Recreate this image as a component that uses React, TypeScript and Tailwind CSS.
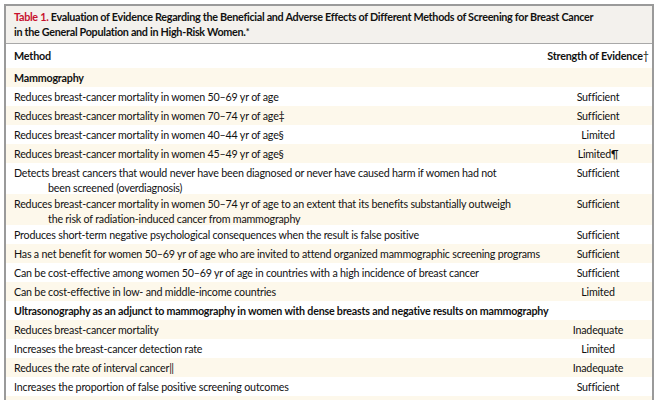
const rows: { text: string[]; value?: string; bold?: boolean }[] = [
  { text: ['Mammography'], bold: true },
  { text: ['Reduces breast-cancer mortality in women 50–69 yr of age'], value: 'Sufficient' },
  { text: ['Reduces breast-cancer mortality in women 70–74 yr of age‡'], value: 'Sufficient' },
  { text: ['Reduces breast-cancer mortality in women 40–44 yr of age§'], value: 'Limited' },
  { text: ['Reduces breast-cancer mortality in women 45–49 yr of age§'], value: 'Limited¶' },
  {
    text: [
      'Detects breast cancers that would never have been diagnosed or never have caused harm if women had not',
      'been screened (overdiagnosis)',
    ],
    value: 'Sufficient',
  },
  {
    text: [
      'Reduces breast-cancer mortality in women 50–74 yr of age to an extent that its benefits substantially outweigh',
      'the risk of radiation-induced cancer from mammography',
    ],
    value: 'Sufficient',
  },
  { text: ['Produces short-term negative psychological consequences when the result is false positive'], value: 'Sufficient' },
  { text: ['Has a net benefit for women 50–69 yr of age who are invited to attend organized mammographic screening  programs'], value: 'Sufficient' },
  { text: ['Can be cost-effective among women 50–69 yr of age in countries with a high incidence of breast cancer'], value: 'Sufficient' },
  { text: ['Can be cost-effective in low- and middle-income countries'], value: 'Limited' },
  { text: ['Ultrasonography as an adjunct to mammography in women with dense breasts and negative results on mammography'], bold: true },
  { text: ['Reduces breast-cancer mortality'], value: 'Inadequate' },
  { text: ['Increases the breast-cancer detection rate'], value: 'Limited' },
  { text: ['Reduces the rate of interval cancer‖'], value: 'Inadequate' },
  { text: ['Increases the proportion of false positive screening outcomes'], value: 'Sufficient' },
  { text: [''], value: '' },
]

export default function App() {
  return (
    <div className="w-[660px] h-[400px] overflow-hidden bg-white pt-[4px] pl-[4px] pr-[6px] font-['Lato','Liberation_Sans',sans-serif] text-[#111]">
      <div className="border-x-2 border-t-2 border-[#9a9a9a]">
        <div className="bg-[#f3f1ed] border-b border-[#a8a8a8] pl-[8px] pr-2 pt-[3px] pb-[2px] h-[38px] text-[10.8px] tracking-[-0.3px] leading-[15px] font-bold whitespace-nowrap">
          <span className="text-[#c8102e]">Table 1.</span> Evaluation of Evidence Regarding the Beneficial and Adverse Effects of Different Methods of Screening for Breast Cancer
          <br />
          in the General Population and in High-Risk Women.
          <span className="text-[9px] align-top">*</span>
        </div>
        <div className="flex items-center h-[24px] text-[10.8px] tracking-[-0.2px] font-bold pt-[1px]">
          <div className="flex-1 pl-[8px]">Method</div>
          <div className="w-[108px] text-center whitespace-nowrap">
            Strength of Evidence<span className="font-normal">†</span>
          </div>
        </div>
        {rows.map((r, i) => (
          <div
            key={i}
            className={`flex text-[10.7px] tracking-[-0.2px] leading-[15px] pt-[2px] ${r.text.length > 1 ? 'h-[31px]' : 'h-[19px]'} ${i % 2 === 0 ? 'bg-[#fdf8eb]' : 'bg-white'} ${r.bold ? 'font-bold' : ''}`}
          >
            <div className="flex-1 min-w-0 pl-[8px] whitespace-nowrap">
              {r.text.map((line, j) => (
                <div key={j} className={j > 0 ? 'pl-[34px]' : ''}>
                  {line}
                </div>
              ))}
            </div>
            {!r.bold && <div className="w-[108px] shrink-0 text-center">{r.value}</div>}
          </div>
        ))}
      </div>
    </div>
  )
}
